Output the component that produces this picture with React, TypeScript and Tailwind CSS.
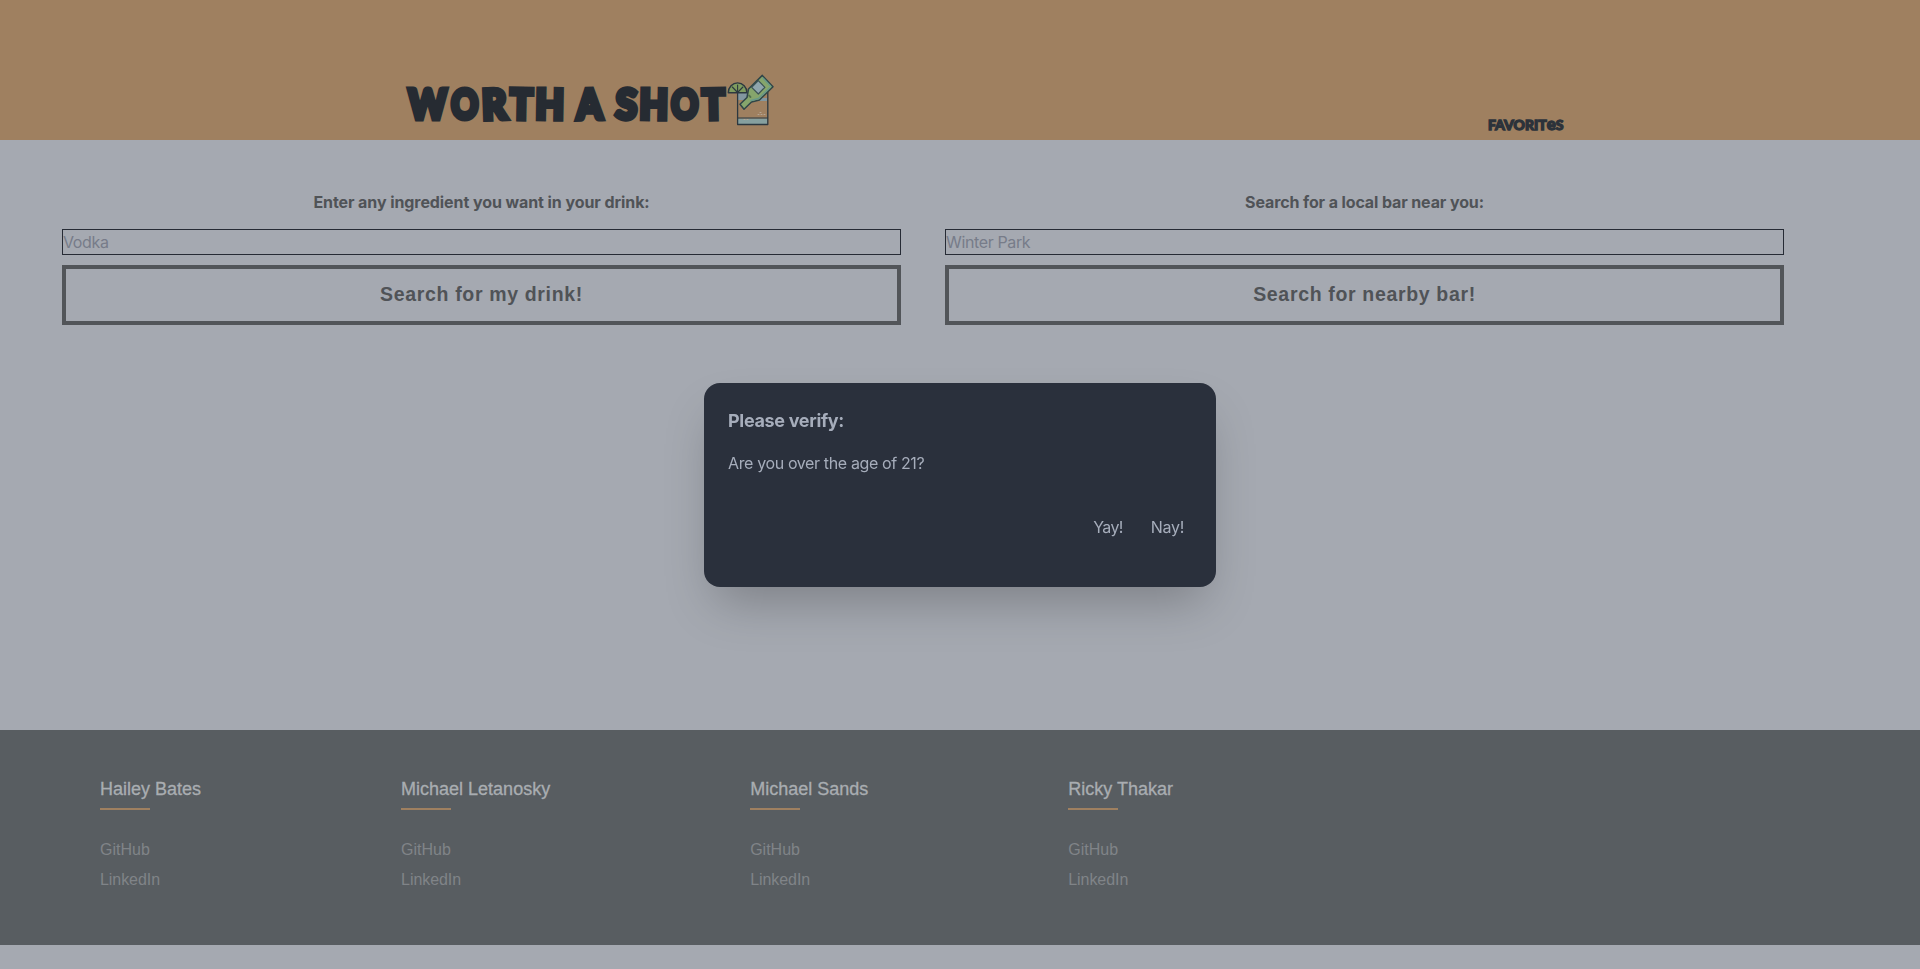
import React from "react";

const people = ["Hailey Bates", "Michael Letanosky", "Michael Sands", "Ricky Thakar"];

// Each letter sits in its own cell, squeezed to the chunky proportions of the wordmark.
const titleLetters: { ch: string; cell: string; shape: string }[] = [
  { ch: "W", cell: "w-[43px]", shape: "scale-x-[0.88]" },
  { ch: "O", cell: "w-[31px]", shape: "scale-x-[0.81]" },
  { ch: "R", cell: "w-[28px]", shape: "scale-x-[0.92] -rotate-2" },
  { ch: "T", cell: "w-[27px]", shape: "scale-x-[0.9] rotate-1" },
  { ch: "H", cell: "w-[30px]", shape: "scale-x-[0.9] rotate-1" },
  { ch: "\u00a0", cell: "w-[8px]", shape: "" },
  { ch: "A", cell: "w-[32px]", shape: "scale-x-[0.88] -rotate-1" },
  { ch: "\u00a0", cell: "w-[8px]", shape: "" },
  { ch: "S", cell: "w-[26px]", shape: "scale-x-[0.94] rotate-2" },
  { ch: "H", cell: "w-[30px]", shape: "scale-x-[0.9] rotate-1" },
  { ch: "O", cell: "w-[31px]", shape: "scale-x-[0.81]" },
  { ch: "T", cell: "w-[27px]", shape: "scale-x-[0.9] -rotate-1" },
];

function DrinkIcon() {
  return (
    <svg className="mt-[72px] h-[56px] w-[50px] shrink-0" viewBox="0 0 50 56" fill="none" strokeLinejoin="round" strokeLinecap="round">
      <path d="M11 21h9v7h-9zM32 26h8v3h-8z" fill="#8297a0" />
      <rect x="10.5" y="46.5" width="30" height="6" fill="#86a09f" />
      <path d="M10.6 20v32.500h30.200V20" stroke="#2c3840" strokeWidth="1.3" />
      <path d="M10.5 46h30" stroke="#2c3840" strokeWidth="1.2" />
      <path d="M1.300 20.700a9.300 9.800 0 0 1 18.600 0z" fill="#7f9c5f" stroke="#2c3840" strokeWidth="1.4" />
      <path d="M10.600 20.500v-7.500M10.600 20.500l-5.300-5.500M10.600 20.500l5.300-5.500" stroke="#2c3840" strokeWidth="1.1" />
      <path d="M35.300 3.400 46 14.700 32.500 28 24.500 30 17 37.300 13 32.300 20 25.500 21.500 17z" fill="#86a56c" stroke="#2f4548" strokeWidth="1.5" />
      <path d="M36.200 6.200 43.500 14M42.500 16 31.500 26.500 24 28.500" stroke="#67988a" strokeWidth="1.4" />
      <path d="m31.300 8.700 6.600 6.600-6.600 6.700-6.600-6.700z" fill="#8fa5ad" stroke="#3c5254" strokeWidth="1.2" />
      <path d="m22 23.500 1.500 1.500" stroke="#52704f" strokeWidth="1.8" />
      <path d="M17 47.500h1M20 47.500h1M31 42.500h1M34 42.500h1M37 42.500h1M33 40.500h1" stroke="#b5a493" strokeWidth="1" />
    </svg>
  );
}

function SearchPanel({ label, placeholder, action, labelClass }: { label: string; placeholder: string; action: string; labelClass: string }) {
  return (
    <div className="flex w-[839px] flex-col">
      <label className={"flex h-6 justify-center whitespace-nowrap font-['Inter',sans-serif] text-base font-bold text-[#505357] " + labelClass}>{label}</label>
      <input
        placeholder={placeholder}
        className="mt-[15px] h-[26px] w-full border border-[#262b35] bg-transparent font-['Inter',sans-serif] text-base tracking-[-0.37px] text-[#505357] outline-none placeholder:text-[#777c89]"
      />
      <button className="mt-[10px] h-[60px] border-4 border-[#525559] font-['Liberation_Sans',Arial,sans-serif] text-[19.5px] font-bold tracking-[0.66px] text-[#505357]">{action}</button>
    </div>
  );
}

export default function App() {
  return (
    <div className="flex h-[969px] w-full flex-col overflow-hidden bg-[#a5a9b1]">
      <header className="flex h-[140px] bg-[#9f8060] font-['Lato',sans-serif]">
        <h1 className="ml-[406px] mt-[73px] flex h-[60px] w-[321px] shrink-0 items-center text-[41px] font-black leading-none text-[#262b32] [-webkit-text-stroke:5.2px_#262b32]">
          {titleLetters.map((l, i) => (
            <span key={i} className={"flex shrink-0 justify-center " + l.cell}>
              <span className={"inline-block " + l.shape}>{l.ch}</span>
            </span>
          ))}
        </h1>
        <DrinkIcon />
        <nav className="ml-[711px] mt-[114px]">
          <a className="flex h-5 items-baseline whitespace-nowrap text-[14px] font-black leading-5 text-[#2c323a] [-webkit-text-stroke:1.3px_#2c323a]">
            FAVORIT<span className="text-[17px] leading-5">e</span>S
          </a>
        </nav>
      </header>

      <main className="flex h-[590px] gap-[44px] pl-[62px] pt-[50px]">
        <SearchPanel label="Enter any ingredient you want in your drink:" placeholder="Vodka" action="Search for my drink!" labelClass="tracking-[-0.08px]" />
        <SearchPanel label="Search for a local bar near you:" placeholder="Winter Park" action="Search for nearby bar!" labelClass="tracking-[-0.12px]" />
      </main>

      <footer className="flex h-[215px] gap-[200px] bg-[#585d61] pl-[100px] pt-[46px] font-['Liberation_Sans',Arial,sans-serif]">
        {people.map((name) => (
          <section key={name} className="flex flex-col items-start">
            <h4 className="h-[32px] whitespace-nowrap text-[18px] leading-[27px] text-[#a9adb1] [-webkit-text-stroke:0.3px_#a9adb1]">{name}</h4>
            <span className="h-[2px] w-[50px] bg-[#9f8060]" />
            <a className="mt-[28px] h-6 text-base leading-6 text-[#808488]">GitHub</a>
            <a className="mt-[6px] h-6 text-base leading-6 tracking-[-0.06px] text-[#808488]">LinkedIn</a>
          </section>
        ))}
      </footer>

      <div className="fixed inset-0 flex items-center justify-center pt-px">
        <div className="flex h-[204px] w-[512px] flex-col rounded-2xl bg-[#2a303c] p-6 font-['Inter',sans-serif] text-[#a6adbb] shadow-2xl">
          <h3 className="text-lg font-bold leading-7 tracking-[-0.32px]">Please verify:</h3>
          <p className="py-4 text-base leading-6 tracking-[-0.37px]">Are you over the age of 21?</p>
          <div className="mt-6 flex justify-end gap-7 pr-2 text-base leading-6">
            <button className="tracking-[-0.6px]">Yay!</button>
            <button className="tracking-[-0.3px]">Nay!</button>
          </div>
        </div>
      </div>
    </div>
  );
}
